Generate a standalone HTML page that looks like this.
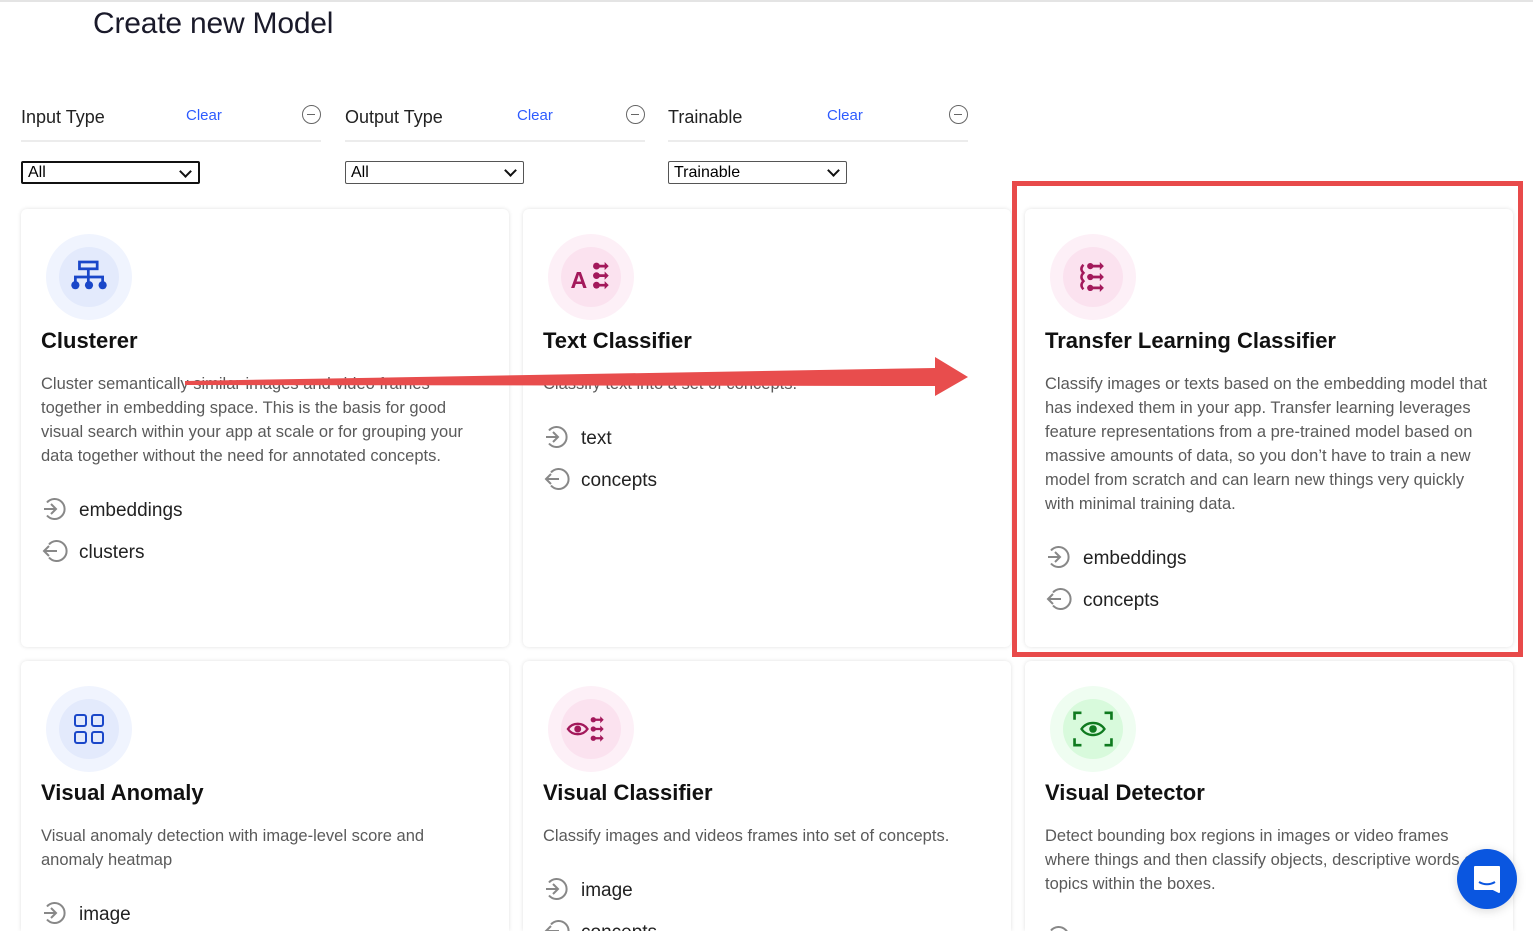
<!DOCTYPE html>
<html><head><meta charset="utf-8"><style>
*{box-sizing:border-box;margin:0;padding:0}
html,body{width:1533px;height:931px;overflow:hidden}
body{background:#fff;font-family:"Liberation Sans",sans-serif;color:#111;position:relative}
.topline{position:absolute;left:0;top:0;width:1533px;height:2px;background:#e4e4e4}
h1{position:absolute;left:93px;top:7px;font-size:30px;font-weight:400;color:#1a1a2a;letter-spacing:-0.2px}
.flt{position:absolute;top:100px;width:300px;height:42px;border-bottom:2px solid #ececec}
.flt .l{position:absolute;left:0;top:7px;font-size:18px;color:#222}
.flt .c{position:absolute;top:7px;font-size:15px;color:#2d5bff}
.flt .m{position:absolute;right:0;top:5px;width:19px;height:19px;border:1.6px solid #666;border-radius:50%}
.flt .m:after{content:"";position:absolute;left:4px;top:7.5px;width:8px;height:1.6px;background:#666}
.sel{position:absolute;top:161px;width:179px;height:23px;border:1px solid #555;border-radius:2px;font-size:16px;padding-left:5px;line-height:21px;color:#000}
.sel.f{border:2px solid #111;line-height:19px}
.sel:after{content:"";position:absolute;right:8px;top:4px;width:7px;height:7px;border-right:2px solid #111;border-bottom:2px solid #111;transform:rotate(45deg)}
.card{position:absolute;width:488px;height:438px;background:#fff;border-radius:6px;box-shadow:0 0 4px rgba(0,0,0,.12);overflow:hidden}
.r2{height:270px;border-radius:6px 6px 0 0}
.ic{position:absolute;left:25px;top:25px;width:86px;height:86px;border-radius:50%}
.ic .in{position:absolute;left:13px;top:13px;width:60px;height:60px;border-radius:50%}
.ic svg{position:absolute;left:13px;top:13px}
.card h2{position:absolute;left:20px;top:119px;font-size:22px;font-weight:700;color:#111}
.card p{position:absolute;left:20px;top:163px;width:440px;font-size:16.5px;line-height:24px;color:#5a5a5a}
.card p.nw{width:470px;white-space:nowrap}
.io{position:absolute;left:20px;font-size:19px;color:#222}
.io svg{position:absolute;left:0;top:-4px}
.io span{position:absolute;left:38px;top:0;white-space:nowrap}
.blue{background:#f0f4fe}.blue .in{background:#e3eafc}
.pink{background:#fdf0f7}.pink .in{background:#fbe2ef}
.green{background:#effdf1}.green .in{background:#d8fadc}
</style></head><body>
<div class="topline"></div>
<h1>Create new Model</h1>

<div class="flt" style="left:21px"><div class="l">Input Type</div><div class="c" style="left:165px">Clear</div><div class="m"></div></div>
<div class="flt" style="left:345px"><div class="l">Output Type</div><div class="c" style="left:172px">Clear</div><div class="m"></div></div>
<div class="flt" style="left:668px"><div class="l">Trainable</div><div class="c" style="left:159px">Clear</div><div class="m"></div></div>
<div class="sel f" style="left:21px">All</div>
<div class="sel" style="left:345px">All</div>
<div class="sel" style="left:668px">Trainable</div>

<svg width="0" height="0" style="position:absolute"><defs>
<g id="in"><path d="M6 6.5A10 10 0 1 1 6 19.5" fill="none" stroke="#888" stroke-width="2"/><path d="M3 13H15M10 8l5 5-5 5" fill="none" stroke="#888" stroke-width="2"/></g>
<g id="out"><path d="M6 6.5A10 10 0 1 1 6 19.5" fill="none" stroke="#888" stroke-width="2" transform="translate(2,0)"/><path d="M16 13H3M8 8l-5 5 5 5" fill="none" stroke="#888" stroke-width="2"/></g>
</defs></svg>

<!-- Row 1 -->
<div class="card" style="left:21px;top:209px">
<div class="ic blue"><div class="in"></div><svg width="60" height="60" viewBox="3 5 44 44"><rect x="18" y="16" width="13" height="5" fill="none" stroke="#1a47c9" stroke-width="2"/><path d="M24.5 21v5M15 32v-5h20v5M24.5 27v5" fill="none" stroke="#1a47c9" stroke-width="2"/><circle cx="15" cy="33" r="3" fill="#1a47c9"/><circle cx="25" cy="33" r="3" fill="#1a47c9"/><circle cx="35" cy="33" r="3" fill="#1a47c9"/></svg></div>
<h2>Clusterer</h2>
<p>Cluster semantically similar images and video frames together in embedding space. This is the basis for good visual search within your app at scale or for grouping your data together without the need for annotated concepts.</p>
<div class="io" style="top:291px"><svg width="28" height="26"><use href="#in"/></svg><span>embeddings</span></div>
<div class="io" style="top:333px"><svg width="28" height="26"><use href="#out"/></svg><span>clusters</span></div>
</div>

<div class="card" style="left:523px;top:209px">
<div class="ic pink"><div class="in"></div><svg width="60" height="60" viewBox="6 7 44 44"><text x="13" y="37" font-family="Liberation Sans" font-weight="700" font-size="17" fill="#a3195b">A</text><g fill="#a3195b"><circle cx="32" cy="21" r="2.5"/><circle cx="32" cy="28" r="2.5"/><circle cx="32" cy="35" r="2.5"/><path d="M33 20h5v-2l3 3-3 3v-2h-5zM33 27h5v-2l3 3-3 3v-2h-5zM33 34h5v-2l3 3-3 3v-2h-5z"/></g></svg></div>
<h2>Text Classifier</h2>
<p>Classify text into a set of concepts.</p>
<div class="io" style="top:219px"><svg width="28" height="26"><use href="#in"/></svg><span>text</span></div>
<div class="io" style="top:261px"><svg width="28" height="26"><use href="#out"/></svg><span>concepts</span></div>
</div>

<div class="card" style="left:1025px;top:209px">
<div class="ic pink"><div class="in"></div><svg width="60" height="60" viewBox="6 7 44 44"><g fill="#a3195b"><path d="M21 20c-2 2-2 4 0 6-2 2-2 4 0 6-2 2-2 4 0 6" fill="none" stroke="#a3195b" stroke-width="1.8"/><circle cx="26" cy="21" r="2.3"/><circle cx="26" cy="29" r="2.3"/><circle cx="26" cy="37" r="2.3"/><path d="M27 20h6v-2l3 3-3 3v-2h-6zM27 28h6v-2l3 3-3 3v-2h-6zM27 36h6v-2l3 3-3 3v-2h-6z"/></g></svg></div>
<h2>Transfer Learning Classifier</h2>
<p class="nw">Classify images or texts based on the embedding model that<br>has indexed them in your app. Transfer learning leverages<br>feature representations from a pre-trained model based on<br>massive amounts of data, so you don’t have to train a new<br>model from scratch and can learn new things very quickly<br>with minimal training data.</p>
<div class="io" style="top:339px"><svg width="28" height="26"><use href="#in"/></svg><span>embeddings</span></div>
<div class="io" style="top:381px"><svg width="28" height="26"><use href="#out"/></svg><span>concepts</span></div>
</div>

<!-- Row 2 -->
<div class="card r2" style="left:21px;top:661px">
<div class="ic blue"><div class="in"></div><svg width="60" height="60" viewBox="0 0 60 60"><g fill="none" stroke="#1a47c9" stroke-width="2"><rect x="16" y="16" width="11" height="11" rx="2"/><rect x="33" y="16" width="11" height="11" rx="2"/><rect x="16" y="33" width="11" height="11" rx="2"/><rect x="33" y="33" width="11" height="11" rx="2"/></g></svg></div>
<h2>Visual Anomaly</h2>
<p>Visual anomaly detection with image-level score and anomaly heatmap</p>
<div class="io" style="top:243px"><svg width="28" height="26"><use href="#in"/></svg><span>image</span></div>
</div>

<div class="card r2" style="left:523px;top:661px">
<div class="ic pink"><div class="in"></div><svg width="60" height="60" viewBox="4 4 52 52"><g fill="#a3195b"><path d="M10 30c4-6 13-6 17 0-4 6-13 6-17 0z" fill="none" stroke="#a3195b" stroke-width="2"/><circle cx="18.5" cy="30" r="3"/><circle cx="32" cy="22" r="2.3"/><circle cx="32" cy="30" r="2.3"/><circle cx="32" cy="38" r="2.3"/><path d="M33 21h5v-2l3 3-3 3v-2h-5zM33 29h5v-2l3 3-3 3v-2h-5zM33 37h5v-2l3 3-3 3v-2h-5z"/></g></svg></div>
<h2>Visual Classifier</h2>
<p>Classify images and videos frames into set of concepts.</p>
<div class="io" style="top:219px"><svg width="28" height="26"><use href="#in"/></svg><span>image</span></div>
<div class="io" style="top:261px"><svg width="28" height="26"><use href="#out"/></svg><span>concepts</span></div>
</div>

<div class="card r2" style="left:1025px;top:661px">
<div class="ic green"><div class="in"></div><svg width="60" height="60" viewBox="4 4 52 52"><g fill="none" stroke="#0f7a1f" stroke-width="2.3"><path d="M14 22v-6h6M40 16h6v6M46 38v6h-6M20 44h-6v-6"/><path d="M20 30c5-7 15-7 20 0-5 7-15 7-20 0z" stroke-width="2"/></g><circle cx="30" cy="30" r="3.3" fill="#0f7a1f"/></svg></div>
<h2>Visual Detector</h2>
<p>Detect bounding box regions in images or video frames where things and then classify objects, descriptive words or topics within the boxes.</p>
<div class="io" style="top:267px"><svg width="28" height="26"><use href="#in"/></svg><span></span></div>
</div>

<!-- annotation -->
<div style="position:absolute;left:1012px;top:181px;width:511px;height:476px;border:5px solid #e84a4a"></div>
<svg style="position:absolute;left:0;top:0" width="1533" height="931"><polygon points="185,381 935,368 935,357 968,377 935,396 935,386 185,385" fill="#e84d4d"/></svg>

<div style="position:absolute;left:1457px;top:849px;width:60px;height:60px;border-radius:50%;background:#0a56e0;box-shadow:0 2px 10px rgba(0,0,0,.15)">
<svg width="60" height="60" viewBox="0 0 60 60"><path d="M18 18h24v25l-6-3H18z" fill="#fff" stroke="#fff" stroke-width="2" stroke-linejoin="round"/><path d="M22 33c5 3 11 3 16 0" fill="none" stroke="#0a56e0" stroke-width="2"/></svg>
</div>
</body></html>
